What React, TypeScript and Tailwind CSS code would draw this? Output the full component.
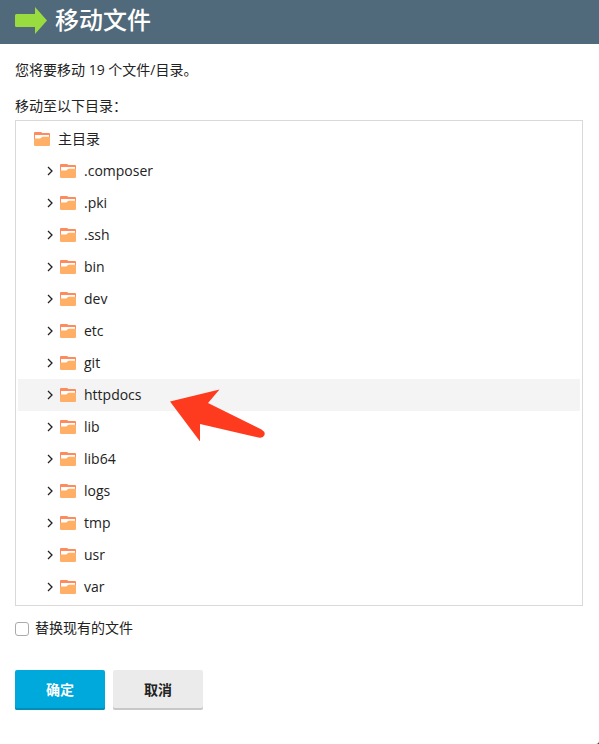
import { useState } from 'react';

const FOLDERS = [
  '.composer',
  '.pki',
  '.ssh',
  'bin',
  'dev',
  'etc',
  'git',
  'httpdocs',
  'lib',
  'lib64',
  'logs',
  'tmp',
  'usr',
  'var',
];

function MoveIcon() {
  return (
    <svg width="32" height="27" viewBox="0 0 32 27" aria-hidden="true">
      <path d="M1.5 7H20V0L32 13.5L20 27V20H1.5Q0 20 0 18.5V8.5Q0 7 1.5 7Z" fill="#99dc40" />
    </svg>
  );
}

function FolderIcon() {
  return (
    <svg width="16" height="14" viewBox="0 0 16 14" className="shrink-0" aria-hidden="true">
      <path d="M0 1Q0 0 1 0H7Q8 0 8 1H15Q16 1 16 2V7H0Z" fill="#ff8a5c" />
      <path d="M1 3H15V7H1Z" fill="#fff" />
      <path d="M0 6.500H6Q6.700 6.500 7.200 5.800L7.500 5.400Q8 4.800 8.800 4.800H16V13Q16 14 15 14H1Q0 14 0 13Z" fill="#ffaf66" />
    </svg>
  );
}

function ChevronIcon() {
  return (
    <svg width="16" height="16" viewBox="0 0 16 16" fill="none" stroke="#222" strokeWidth="1.3" aria-hidden="true">
      <path d="M4 4L8 8L4 12" />
    </svg>
  );
}

function PointerArrow() {
  return (
    <svg
      width="96"
      height="54"
      viewBox="0 0 96 54"
      className="pointer-events-none absolute top-2 left-[152px] z-10"
      aria-hidden="true"
    >
      <path d="M0 14.500L49.500 2.500L38 16L91.500 42.500Q95.500 45 94.500 48Q93 51.500 88.500 50.500L30 37V54.500Z" fill="#ff3b1f" />
    </svg>
  );
}

export default function App() {
  const [selected, setSelected] = useState('httpdocs');
  const [replace, setReplace] = useState(false);

  return (
    <div className="relative min-h-screen bg-white font-['Open_Sans','Noto_Sans_CJK_SC',sans-serif] text-sm text-[#222]">
      <header className="flex h-11 items-center gap-2 bg-[#516a7b] px-[15px] pb-1">
        <MoveIcon />
        <h1 className="text-2xl leading-8 font-medium text-white">移动文件</h1>
      </header>

      <form className="px-4 pt-4 pl-[15px]" onSubmit={(e) => e.preventDefault()}>
        <p className="leading-5">您将要移动 19 个文件/目录。</p>
        <p id="target-label" className="mt-4 leading-5">
          移动至以下目录：
        </p>

        <div className="mt-1 border border-[#d9d9d9] p-0.5" role="tree" aria-labelledby="target-label">
          <div className="flex h-8 items-center gap-2 px-4" role="treeitem" aria-expanded="true">
            <FolderIcon />
            <span>主目录</span>
          </div>
          {FOLDERS.map((name) => (
            <div
              key={name}
              role="treeitem"
              aria-selected={name === selected}
              className={name === selected ? 'relative bg-[#f4f4f4]' : 'relative'}
            >
              <div className="flex h-8 items-center pl-[26px]">
                <button type="button" aria-label={`展开 ${name}`}>
                  <ChevronIcon />
                </button>
                <button
                  type="button"
                  className="flex h-8 flex-1 items-center gap-2 text-left"
                  onClick={() => setSelected(name)}
                >
                  <FolderIcon />
                  <span>{name}</span>
                </button>
              </div>
              {name === 'httpdocs' && <PointerArrow />}
            </div>
          ))}
        </div>

        <label className="mt-3 flex items-center gap-1.5 leading-5">
          <input
            type="checkbox"
            checked={replace}
            onChange={(e) => setReplace(e.target.checked)}
            className="mt-0.5 size-3.5 appearance-none rounded-[3px] border border-[#ababab] bg-white checked:bg-[#00a9dc]"
          />
          替换现有的文件
        </label>

        <div className="mt-8 flex gap-2">
          <button
            type="submit"
            className="h-10 w-[90px] rounded-[2px] bg-[#00a9dc] font-semibold text-white shadow-[inset_0_-2px_0_#008fbb]"
          >
            确定
          </button>
          <button
            type="button"
            className="h-10 w-[90px] rounded-[2px] bg-[#ebebeb] font-semibold shadow-[inset_0_-2px_0_#c8c8c8]"
          >
            取消
          </button>
        </div>
      </form>

      <svg width="3" height="3" viewBox="0 0 3 3" className="absolute right-0 bottom-0" aria-hidden="true">
        <path d="M3 0V3H0Q3 3 3 0Z" fill="#333" />
      </svg>
    </div>
  );
}
